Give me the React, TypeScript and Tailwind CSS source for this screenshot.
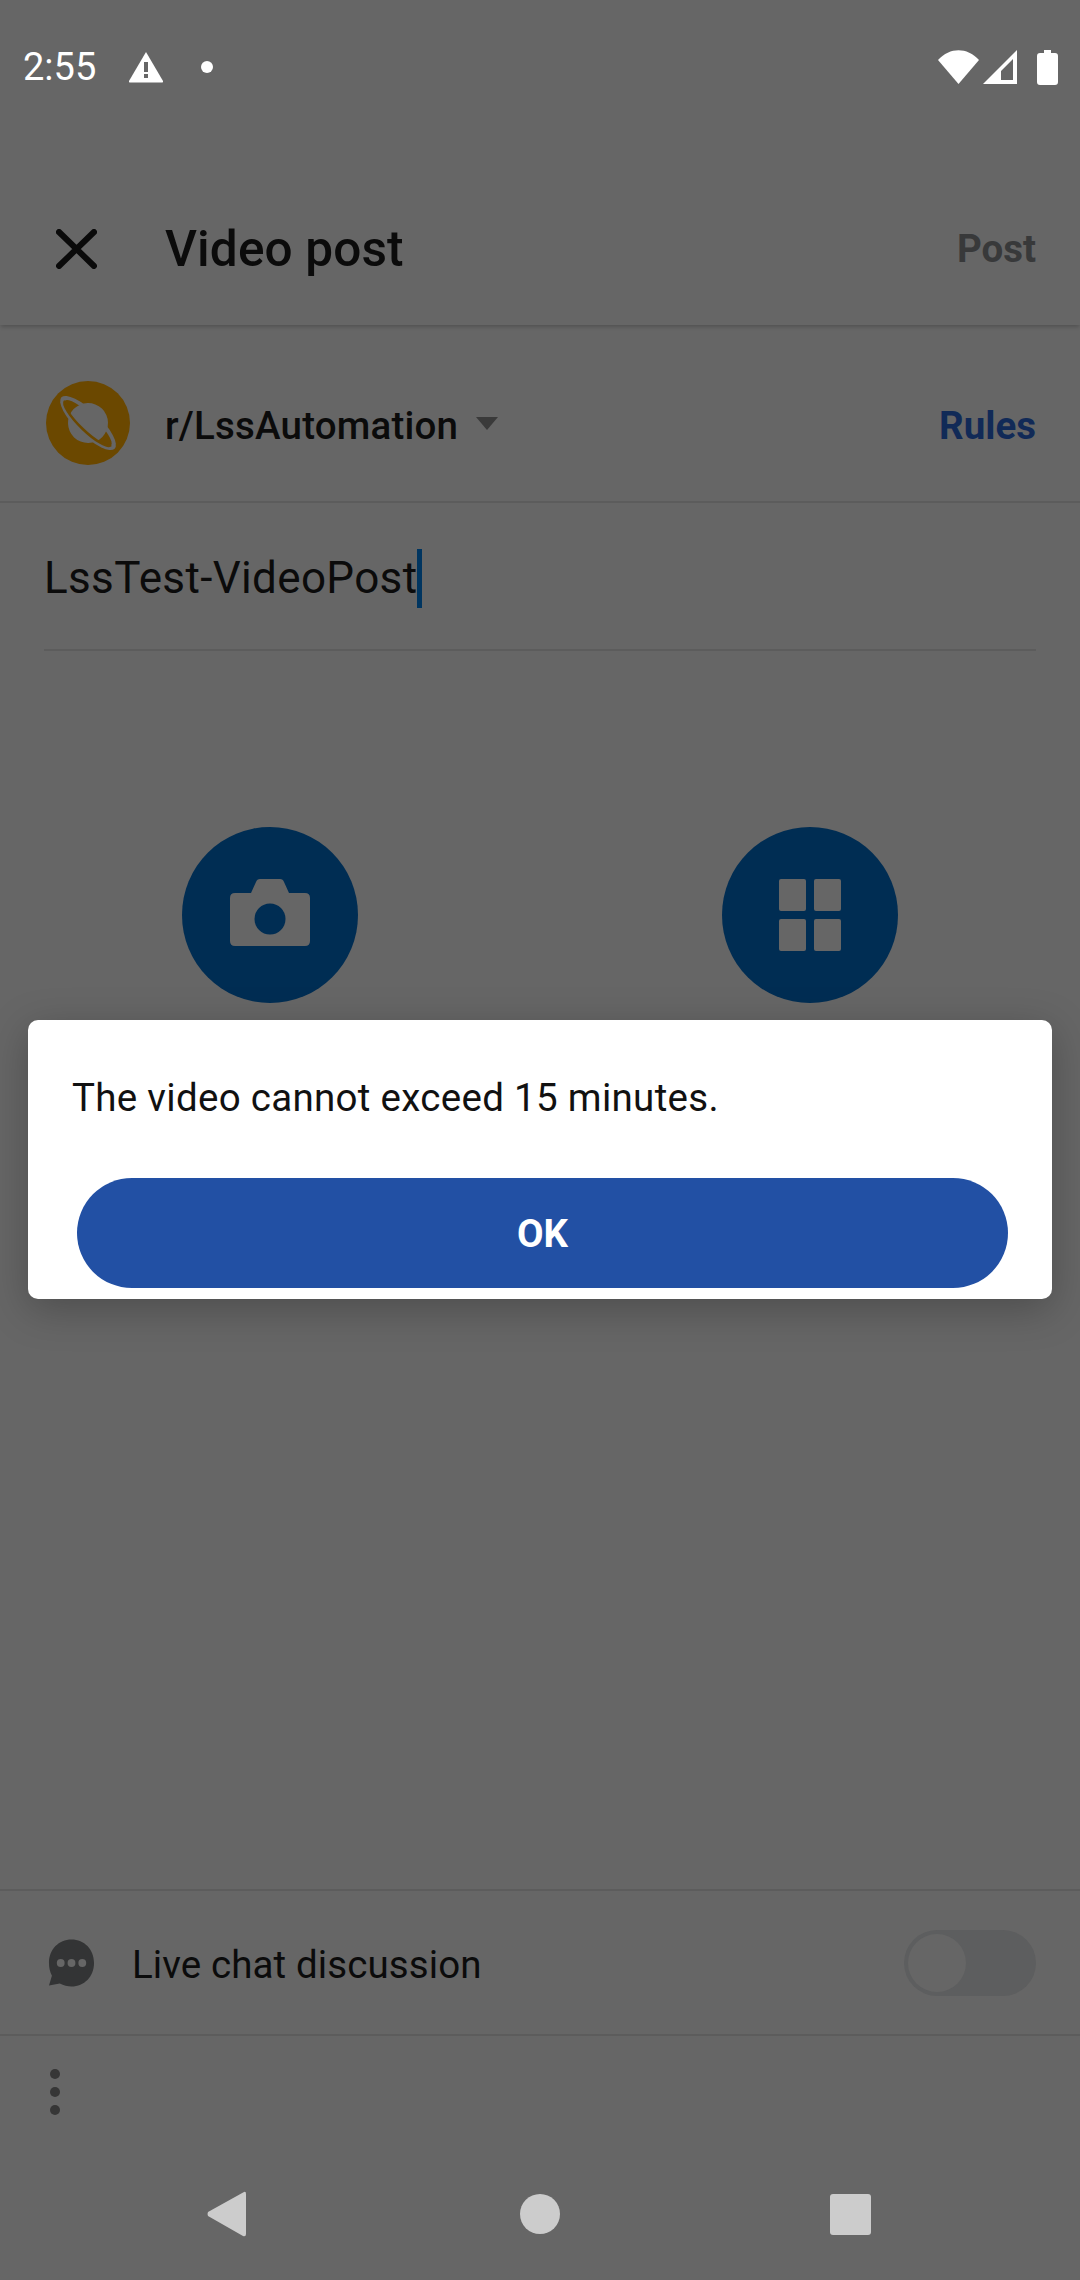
// App.tsx
export default function App() {
  return (
    <div className="relative w-[1080px] h-[2280px] overflow-hidden flex flex-col bg-[#666666] font-['Roboto',sans-serif]">
      {/* Status bar */}
      <div className="h-[132px] shrink-0 flex items-center justify-between pl-[23px] pr-[22px] pt-[2px] text-white">
        <div className="flex items-center">
          <span className="text-[38px] leading-none w-[105px]">2:55</span>
          <svg width="36" height="32" viewBox="0 0 36 32">
            <path d="M18 1 L35 30 Q35.5 31.5 34 31.5 H2 Q0.5 31.5 1 30 Z" fill="#fff" />
            <rect x="16" y="11" width="4" height="10" fill="#666666" />
            <rect x="16" y="23" width="4" height="4" fill="#666666" />
          </svg>
          <span className="ml-[37px] w-[12px] h-[12px] rounded-full bg-white" />
        </div>
        <div className="flex items-center">
          <svg width="41" height="34" viewBox="0 0 41 34">
            <path d="M0 10 C12 -3 29 -3 41 10 L20.5 34 Z" fill="#fff" />
          </svg>
          <svg width="34" height="34" viewBox="0 0 34 34" className="ml-[4px]">
            <path d="M34 0 V34 H0 Z M30 9 L18 21 V30 H30 Z" fill="#fff" fillRule="evenodd" />
          </svg>
          <svg width="21" height="35" viewBox="0 0 21 35" className="ml-[20px]">
            <path d="M7 0 H14 V3 H18 Q21 3 21 6 V32 Q21 35 18 35 H3 Q0 35 0 32 V6 Q0 3 3 3 H7 Z" fill="#fff" />
          </svg>
        </div>
      </div>

      {/* Toolbar */}
      <div className="relative h-[193px] shrink-0 flex items-center justify-between pl-[56px] pr-[44px] pt-[40px] shadow-[0_3px_4px_-1px_rgba(0,0,0,0.2)]">
        <div className="flex items-center">
          <svg width="41" height="40" viewBox="0 0 41 40">
            <path d="M3 3 L38 37 M38 3 L3 37" stroke="#0a0a0a" strokeWidth="6" strokeLinecap="round" />
          </svg>
          <span className="ml-[68px] pt-[2px] text-[49.5px] leading-none tracking-[0.15px] font-medium text-[#0b0b0b]">Video post</span>
        </div>
        <span className="pt-[2px] text-[38.5px] leading-none font-bold text-[#38393a]">Post</span>
      </div>

      {/* Community row */}
      <div className="h-[178px] shrink-0 flex items-center justify-between pl-[46px] pr-[44px] pt-[20px] border-b-2 border-[#5c5c5c]">
        <div className="flex items-center">
          <svg width="84" height="84" viewBox="0 0 84 84">
            <circle cx="42" cy="42" r="42" fill="#6b4800" />
            <g transform="rotate(44 42 42)">
              <ellipse cx="42" cy="42" rx="37" ry="12" fill="#666666" />
              <ellipse cx="42" cy="42" rx="32" ry="8" fill="#6b4800" />
              <circle cx="42" cy="42" r="20" fill="#666666" />
              <path d="M10 42 A32 8 0 0 0 74 42" fill="none" stroke="#6b4800" strokeWidth="2.5" />
            </g>
          </svg>
          <span className="ml-[35px] pt-[6px] text-[38.5px] leading-none tracking-[0.2px] font-medium text-[#0b0b0b]">r/LssAutomation</span>
          <svg width="22" height="13" viewBox="0 0 22 13" className="ml-[18px]">
            <path d="M0 0 H22 L11 13 Z" fill="#3a3a3a" />
          </svg>
        </div>
        <span className="pt-[6px] text-[38.5px] leading-none font-bold text-[#112a57]">Rules</span>
      </div>

      {/* Title field */}
      <div className="mx-[44px] h-[148px] shrink-0 pt-[4px] border-b-2 border-[#5c5c5c] flex items-center">
        <span className="text-[44px] leading-none tracking-[0.35px] text-[#0b0b0b]">LssTest-VideoPost</span>
        <span className="w-[5px] h-[59px] bg-[#003560]" />
      </div>

      {/* Media buttons */}
      <div className="mt-[176px] shrink-0 flex justify-between pl-[182px] pr-[182px]">
        <div className="w-[176px] h-[176px] pb-[5px] rounded-full bg-[#002d53] flex items-center justify-center">
          <svg width="80" height="67" viewBox="0 0 80 67">
            <path d="M30 0 H50 Q53 0 54 3 L59 14 H75 Q80 14 80 19 V62 Q80 67 75 67 H5 Q0 67 0 62 V19 Q0 14 5 14 H21 L26 3 Q27 0 30 0 Z" fill="#666666" />
            <circle cx="40" cy="40" r="15.5" fill="#002d53" />
          </svg>
        </div>
        <div className="w-[176px] h-[176px] rounded-full bg-[#002d53] flex items-center justify-center">
          <div className="grid grid-cols-2 gap-[8px] w-[62px]">
            <div className="h-[32px] w-[27px] rounded-[2px] bg-[#666666]" />
            <div className="h-[32px] w-[27px] rounded-[2px] bg-[#666666]" />
            <div className="h-[32px] w-[27px] rounded-[2px] bg-[#666666]" />
            <div className="h-[32px] w-[27px] rounded-[2px] bg-[#666666]" />
          </div>
        </div>
      </div>

      <div className="flex-1" />

      {/* Live chat row */}
      <div className="h-[147px] shrink-0 flex items-center justify-between pl-[48px] pr-[44px] border-t-2 border-b-2 border-[#5c5c5c]">
        <div className="flex items-center">
          <svg width="47" height="48" viewBox="0 0 48 48">
            <path d="M24 0 C37 0 47 10 47 24 C47 38 37 48 24 48 C20 48 16 47 12 45 L1 47 L4 37 C2 33 1 29 1 24 C1 10 11 0 24 0 Z" fill="#333435" />
            <circle cx="13" cy="24" r="4" fill="#666666" />
            <circle cx="24" cy="24" r="4" fill="#666666" />
            <circle cx="35" cy="24" r="4" fill="#666666" />
          </svg>
          <span className="ml-[37px] pt-[6px] text-[38.5px] leading-none tracking-[0.1px] text-[#0b0b0b]">Live chat discussion</span>
        </div>
        <div className="w-[132px] h-[66px] rounded-full bg-[#5d5e5f] relative">
          <div className="absolute left-[4px] top-[4px] w-[58px] h-[58px] rounded-full bg-[#666666]" />
        </div>
      </div>

      {/* Overflow menu */}
      <div className="h-[112px] shrink-0 flex flex-col items-center justify-center gap-[8px] w-[110px]">
        <span className="w-[10px] h-[10px] rounded-full bg-[#363636]" />
        <span className="w-[10px] h-[10px] rounded-full bg-[#363636]" />
        <span className="w-[10px] h-[10px] rounded-full bg-[#363636]" />
      </div>

      {/* Nav bar */}
      <div className="h-[132px] shrink-0 flex items-center pl-[207px]">
        <svg width="39" height="46" viewBox="0 0 39 46">
          <path d="M37 1 Q39 0 39 3 V43 Q39 46 36 45 L1 25 Q0 23 1 21 Z" fill="#cccccc" />
        </svg>
        <div className="ml-[274px] w-[40px] h-[40px] rounded-full bg-[#cccccc]" />
        <div className="ml-[270px] w-[41px] h-[41px] rounded-[3px] bg-[#cccccc]" />
      </div>

      {/* Dialog */}
      <div className="absolute left-[28px] top-[1020px] w-[1024px] h-[279px] bg-white rounded-[10px] shadow-[0_10px_40px_rgba(0,0,0,0.25)] flex flex-col">
        <p className="mt-[55px] ml-[44px] text-[38.5px] leading-[46px] tracking-[0.3px] text-[#111111]">The video cannot exceed 15 minutes.</p>
        <button className="mt-[57px] ml-[49px] mr-[44px] h-[110px] pt-[2px] rounded-full bg-[#2250a4] text-white text-[38.5px] leading-none font-bold">OK</button>
      </div>
    </div>
  );
}
